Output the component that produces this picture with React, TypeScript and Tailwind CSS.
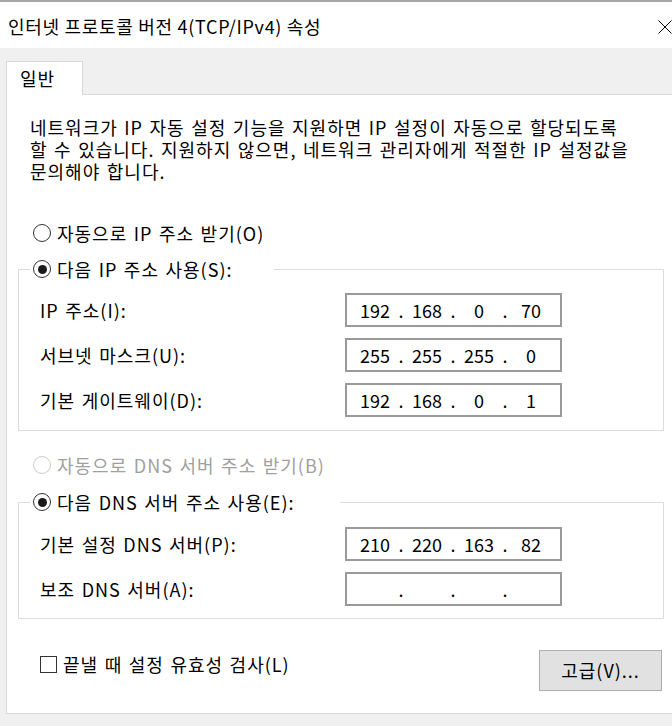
const font = "font-['Noto_Sans_CJK_KR','Noto_Sans',sans-serif]";

function Radio({ checked, disabled }: { checked?: boolean; disabled?: boolean }) {
  return (
    <span
      className={`flex h-[18px] w-[18px] shrink-0 items-center justify-center rounded-full border bg-white ${
        disabled ? "border-[#cccccc]" : "border-[#333333]"
      }`}
    >
      {checked && <span className="h-[9px] w-[9px] rounded-full bg-[#1a1a1a]" />}
    </span>
  );
}

function RadioRow({
  label,
  checked,
  disabled,
}: {
  label: string;
  checked?: boolean;
  disabled?: boolean;
}) {
  return (
    <div
      className={`flex h-[24px] items-center gap-[6px] whitespace-nowrap ${
        disabled ? "text-[#a0a0a0]" : "text-black"
      }`}
    >
      <Radio checked={checked} disabled={disabled} />
      <span>{label}</span>
    </div>
  );
}

function IpBox({ octets }: { octets: string[] }) {
  return (
    <div className="flex h-[34px] w-[217px] items-center border-2 border-[#9a9a9a] bg-white pl-[9px] tracking-normal [word-spacing:0px]">
      {octets.map((o, i) => (
        <div key={i} className="flex">
          {i > 0 && <span className="w-[14px] text-center">.</span>}
          <span className="w-[38px] text-center">{o}</span>
        </div>
      ))}
    </div>
  );
}

function FieldRow({ label, octets }: { label: string; octets: string[] }) {
  return (
    <div className="flex items-center pl-[21px]">
      <span className="w-[305px]">{label}</span>
      <IpBox octets={octets} />
    </div>
  );
}

export default function App() {
  return (
    <div
      className={`relative h-[726px] w-[672px] overflow-hidden bg-[#f0f0f0] text-[18px] tracking-[1px] text-black [word-spacing:1.5px] ${font}`}
    >
      {/* title bar */}
      <div className="flex h-[48px] items-center justify-between border-t-2 border-[#a6a6a6] bg-white pl-[8px] pt-[2px]">
        <span className="text-[18px] tracking-[0.7px] [word-spacing:0px]">인터넷 프로토콜 버전 4(TCP/IPv4) 속성</span>
        <svg width="14" height="14" viewBox="0 0 14 14" className="mb-[-2px]">
          <path d="M0.5 0.5 L13.5 13.5 M13.5 0.5 L0.5 13.5" stroke="#000" strokeWidth="1" fill="none" />
        </svg>
      </div>

      {/* tabs */}
      <div className="pl-[6px] pt-[13px]">
        <div className="relative z-10 -mb-px flex h-[34px] w-[77px] items-center border border-b-0 border-[#d9d9d9] bg-white pl-[13px]">
          일반
        </div>
        <div className="h-[620px] w-[700px] border border-[#d9d9d9] bg-white">
          <div className="ml-[23px] mt-[21px] leading-[22px]">
            <div>네트워크가 IP 자동 설정 기능을 지원하면 IP 설정이 자동으로 할당되도록</div>
            <div>할 수 있습니다. 지원하지 않으면, 네트워크 관리자에게 적절한 IP 설정값을</div>
            <div>문의해야 합니다.</div>
          </div>

          <div className="ml-[26px] mt-[39px]">
            <RadioRow label="자동으로 IP 주소 받기(O)" />
          </div>

          <fieldset className="ml-[11px] mt-[12px] w-[646px] border border-[#dcdcdc] pb-[13px]">
            <legend className="ml-[11px] w-[244px] pl-[3px]">
              <RadioRow label="다음 IP 주소 사용(S):" checked />
            </legend>
            <div className="flex flex-col gap-[11px] pt-[12px]">
              <FieldRow label="IP 주소(I):" octets={["192", "168", "0", "70"]} />
              <FieldRow label="서브넷 마스크(U):" octets={["255", "255", "255", "0"]} />
              <FieldRow label="기본 게이트웨이(D):" octets={["192", "168", "0", "1"]} />
            </div>
          </fieldset>

          <div className="ml-[26px] mt-[22px]">
            <RadioRow label="자동으로 DNS 서버 주소 받기(B)" disabled />
          </div>

          <fieldset className="ml-[11px] mt-[13px] w-[646px] border border-[#dcdcdc] pb-[12px]">
            <legend className="ml-[11px] w-[310px] pl-[3px]">
              <RadioRow label="다음 DNS 서버 주소 사용(E):" checked />
            </legend>
            <div className="flex flex-col gap-[11px] pt-[13px]">
              <FieldRow label="기본 설정 DNS 서버(P):" octets={["210", "220", "163", "82"]} />
              <FieldRow label="보조 DNS 서버(A):" octets={["", "", "", ""]} />
            </div>
          </fieldset>

          <div className="mt-[31px] flex w-[655px] items-start justify-between">
            <label className="ml-[33px] mt-[2px] flex h-[24px] items-center gap-[6px]">
              <span className="h-[17px] w-[17px] border border-[#333333] bg-white" />
              <span>끝낼 때 설정 유효성 검사(L)</span>
            </label>
            <button className="flex h-[41px] w-[123px] items-center justify-center border border-[#adadad] bg-[#e1e1e1]">
              고급(V)...
            </button>
          </div>
        </div>
      </div>
    </div>
  );
}
